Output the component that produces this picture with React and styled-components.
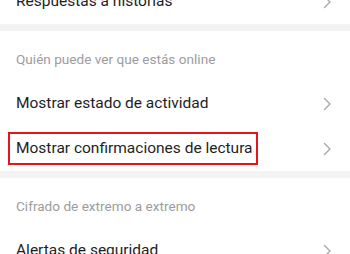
import React from 'react';
import styled, { createGlobalStyle } from 'styled-components';

const GlobalStyle = createGlobalStyle`
    html, body {
        margin: 0;
        padding: 0;
        background: #ffffff;
        overflow: hidden;
    }
    body {
        font-family: Roboto, "Noto Sans", sans-serif;
    }
`;

const Screen = styled.div`
    width: 350px;
    height: 254px;
    overflow: hidden;
    background: #fff;
`;

const List = styled.div`
    display: flex;
    flex-direction: column;
    margin-top: -21px;
`;

const Row = styled.div`
    height: 45px;
    display: flex;
    align-items: center;
    justify-content: space-between;
    padding: 0 18px 0 16px;
`;

const Label = styled.span`
    font-size: 15.5px;
    color: #1e1e1e;
    line-height: 1;
    ${({ $highlight }) => $highlight && `
        border: 2px solid #e8141b;
        padding: 7px 3px 7px 6px;
        margin-left: -8px;
    `}
`;

const Divider = styled.div`
    height: 7px;
    background: #f3f3f3;
`;

const SectionHeader = styled.div`
    height: 50px;
    display: flex;
    align-items: flex-start;
    padding: 20px 16px 0;
    box-sizing: border-box;
    font-size: 13.6px;
    color: #9c9c9c;
`;

const Chevron = () => (
    <svg width="9" height="14" viewBox="0 0 9 14" fill="none">
        <path d="M1.5 1.5 L7 7 L1.5 12.5" stroke="#a8a8a8" strokeWidth="1.4" strokeLinecap="round" strokeLinejoin="round" />
    </svg>
);

export default function App() {
    return (
        <Screen>
            <GlobalStyle />
            <List>
                <Row>
                    <Label>Respuestas a historias</Label>
                    <Chevron />
                </Row>
                <Divider />
                <SectionHeader>Quién puede ver que estás online</SectionHeader>
                <Row>
                    <Label>Mostrar estado de actividad</Label>
                    <Chevron />
                </Row>
                <Row>
                    <Label $highlight>Mostrar confirmaciones de lectura</Label>
                    <Chevron />
                </Row>
                <Divider />
                <SectionHeader>Cifrado de extremo a extremo</SectionHeader>
                <Row>
                    <Label>Alertas de seguridad</Label>
                    <Chevron />
                </Row>
            </List>
        </Screen>
    );
}
